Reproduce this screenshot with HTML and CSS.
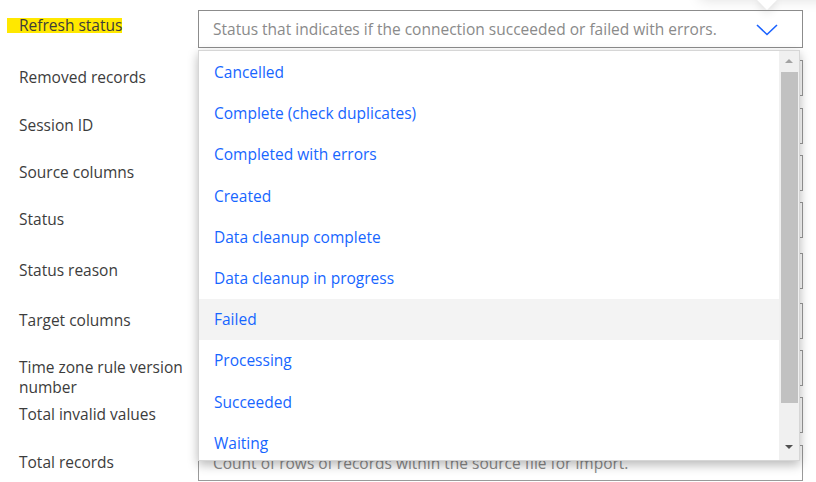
FILE: index.html
```html
<!DOCTYPE html>
<html lang="en">
<head>
<meta charset="utf-8">
<title>Refresh status</title>
<link rel="stylesheet" href="styles.css">
</head>
<body>
<div class="page">
  <div class="callout" aria-hidden="true"></div>
  <div class="form">
    <div class="row first">
      <div class="label"><span class="hl">Refresh status</span></div>
      <div class="field select">
        <span class="ph">Status that indicates if the connection succeeded or failed with errors.</span>
        <svg class="chev" width="22" height="12" viewBox="0 0 22 12" aria-hidden="true"><polyline points="1,1 11,10.5 21,1" fill="none" stroke="#1a62ff" stroke-width="1.6"/></svg>
      </div>
    </div>
    <div class="row">
      <div class="label">Removed records</div>
      <div class="field"></div>
    </div>
    <div class="row short">
      <div class="label">Session ID</div>
      <div class="field"></div>
    </div>
    <div class="row short">
      <div class="label">Source columns</div>
      <div class="field"></div>
    </div>
    <div class="row tall">
      <div class="label">Status</div>
      <div class="field"></div>
    </div>
    <div class="row taller">
      <div class="label">Status reason</div>
      <div class="field"></div>
    </div>
    <div class="row short">
      <div class="label">Target columns</div>
      <div class="field"></div>
    </div>
    <div class="row short">
      <div class="label">Time zone rule version number</div>
      <div class="field"></div>
    </div>
    <div class="row">
      <div class="label">Total invalid values</div>
      <div class="field"></div>
    </div>
    <div class="row last">
      <div class="label">Total records</div>
      <div class="field"><span class="ph">Count of rows of records within the source file for import.</span></div>
    </div>
  </div>

  <div class="dropdown">
    <ul class="options">
      <li>Cancelled</li>
      <li>Complete (check duplicates)</li>
      <li>Completed with errors</li>
      <li>Created</li>
      <li>Data cleanup complete</li>
      <li>Data cleanup in progress</li>
      <li class="hover">Failed</li>
      <li>Processing</li>
      <li>Succeeded</li>
      <li>Waiting</li>
    </ul>
    <div class="scrollbar">
      <div class="arrow up"></div>
      <div class="thumb"></div>
      <div class="arrow down"></div>
    </div>
  </div>
</div>
</body>
</html>
```
FILE: styles.css
```css
* { box-sizing: border-box; }
html, body { margin: 0; padding: 0; background: #fff; }
body {
  font-family: "Open Sans", "Noto Sans", "Liberation Sans", sans-serif;
  font-size: 15.5px;
  color: #3c3c3c;
  width: 816px;
  height: 482px;
  overflow: hidden;
}
.page {
  position: relative;
  width: 816px;
  height: 482px;
  padding-top: 10px;
  overflow: hidden;
}
.callout {
  position: absolute;
  left: 700px;
  top: -40px;
  width: 160px;
  height: 40px;
  background: #fff;
  box-shadow: 0 0 14px rgba(0, 0, 0, 0.13);
}
.callout::after {
  content: "";
  position: absolute;
  left: 60px;
  bottom: -7px;
  width: 14px;
  height: 14px;
  background: #fff;
  transform: rotate(45deg);
  box-shadow: 3px 3px 8px rgba(0, 0, 0, 0.10);
}
.form {
  position: relative;
  display: flex;
  flex-direction: column;
}
.row {
  display: grid;
  grid-template-columns: 198px 605px;
  align-items: start;
  height: 48px;
}
.row.first { height: 50px; }
.row.short { height: 47px; }
.row.tall { height: 51px; }
.row.taller { height: 50px; }
.row.last { height: 40px; }
.label {
  padding: 7px 0 0 19px;
  width: 192px;
  line-height: 20px;
  color: #3c3c3c;
}
.row.first .label { padding-top: 5px; }
.hl {
  display: inline-block;
  margin-left: -12px;
  padding: 0 0 0 12px;
  background: linear-gradient(#ffe800, #ffe800) no-repeat 0 3px / 100% 15px;
}
.field {
  height: 36px;
  border: 1px solid #9a9a9a;
  display: flex;
  align-items: center;
  padding-left: 14px;
}
.field.select {
  height: 38px;
  border-color: #8c8c8c;
  justify-content: space-between;
  padding-right: 24px;
}
.ph {
  color: #8a8a8a;
  white-space: nowrap;
}
.chev { display: block; margin-top: 2px; }
.dropdown {
  position: absolute;
  left: 198px;
  top: 50px;
  width: 602px;
  height: 411px;
  background: #fff;
  border: 1px solid #d6d6d6;
  box-shadow: 0 4px 10px rgba(0, 0, 0, 0.28);
  display: flex;
}
.options {
  list-style: none;
  margin: 0;
  padding: 1px 0 0;
  flex: 1;
  overflow: hidden;
}
.options li {
  height: 41.2px;
  line-height: 41.2px;
  padding-left: 15px;
  color: #1766ff;
  white-space: nowrap;
}
.options li.hover { background: #f3f3f3; }
.scrollbar {
  width: 20px;
  background: #f0f0f0;
  display: flex;
  flex-direction: column;
  align-items: flex-end;
  padding-right: 1px;
}
.arrow {
  width: 17px;
  height: 21px;
  position: relative;
}
.arrow::after {
  content: "";
  position: absolute;
  left: 4px;
  border-left: 4.5px solid transparent;
  border-right: 4.5px solid transparent;
}
.arrow.up::after {
  top: 8px;
  border-bottom: 4.5px solid #a3a3a3;
}
.arrow.down { margin-top: auto; height: 22px; }
.arrow.down::after {
  top: 7px;
  border-top: 4.5px solid #505050;
}
.thumb {
  width: 17px;
  height: 331px;
  background: #c1c1c1;
}
```
